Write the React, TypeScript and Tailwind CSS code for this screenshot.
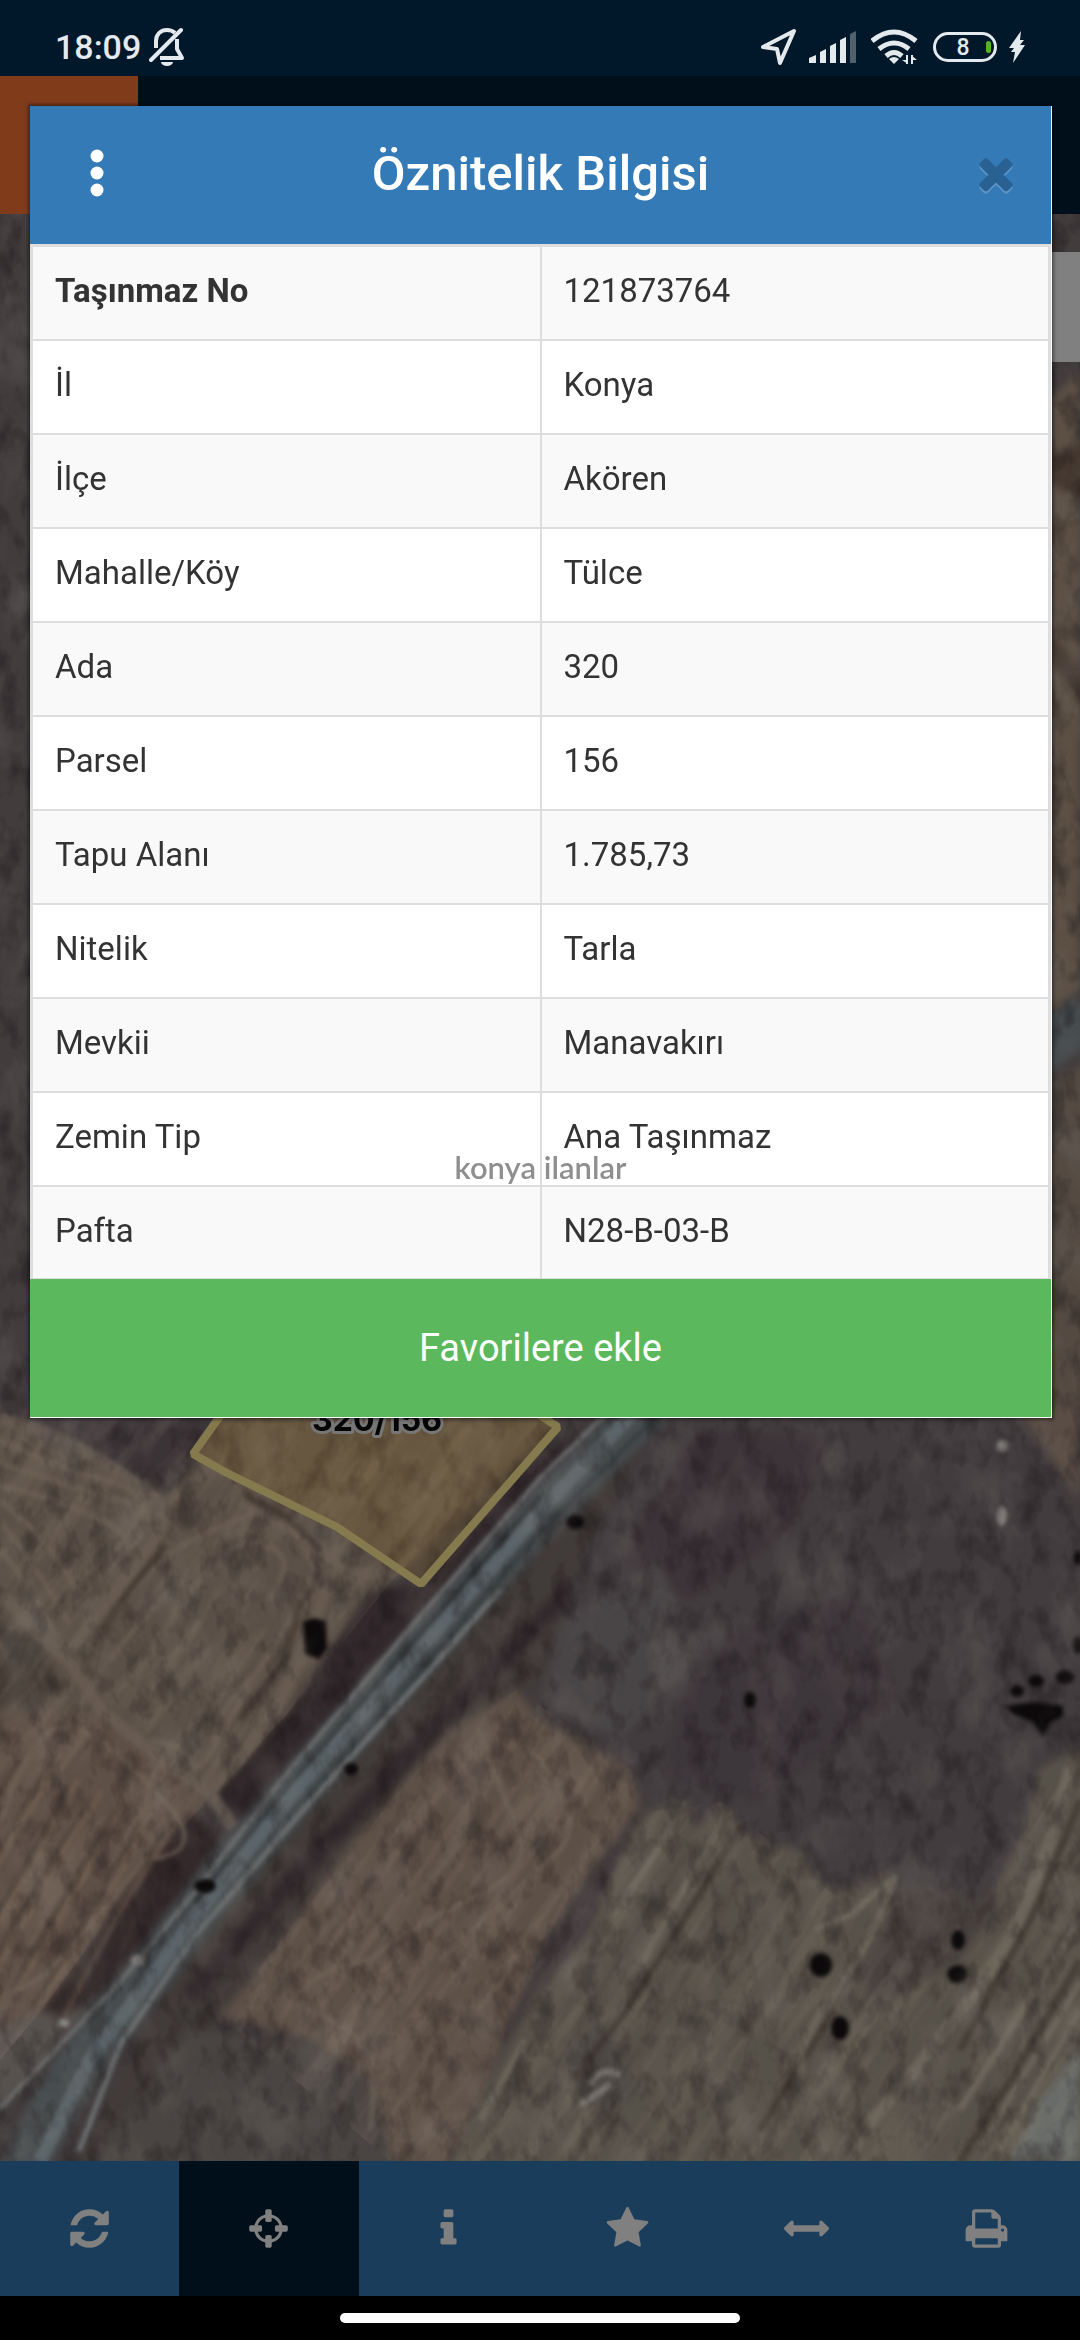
import { useState } from 'react';

const attributes = [
  { label: 'Taşınmaz No', value: '121873764' },
  { label: 'İl', value: 'Konya' },
  { label: 'İlçe', value: 'Akören' },
  { label: 'Mahalle/Köy', value: 'Tülce' },
  { label: 'Ada', value: '320' },
  { label: 'Parsel', value: '156' },
  { label: 'Tapu Alanı', value: '1.785,73' },
  { label: 'Nitelik', value: 'Tarla' },
  { label: 'Mevkii', value: 'Manavakırı' },
  { label: 'Zemin Tip', value: 'Ana Taşınmaz' },
  { label: 'Pafta', value: 'N28-B-03-B' },
];

// Font Awesome 4 shapes on their 1792 grid
const tools = [
  {
    id: 'refresh',
    label: 'Yenile',
    path: 'M1639 1056q0 5-1 7-64 268-268 434.5t-478 166.5q-146 0-282.5-55t-243.5-157l-129 129q-19 19-45 19t-45-19-19-45v-448q0-26 19-45t45-19h448q26 0 45 19t19 45-19 45l-137 137q71 66 161 102t187 36q134 0 250-65t186-179q11-17 53-117 8-23 30-23h192q13 0 22.5 9.5t9.5 22.5zm25-800v448q0 26-19 45t-45 19h-448q-26 0-45-19t-19-45 19-45l138-138q-148-137-349-137-134 0-250 65t-186 179q-11 17-53 117-8 23-30 23h-199q-13 0-22.5-9.5t-9.5-22.5v-7q65-268 270-434.5t480-166.5q146 0 284 55.5t245 156.5l130-129q19-19 45-19t45 19 19 45z',
  },
  {
    id: 'locate',
    label: 'Konum',
    path: 'M1325 1024h-109q-26 0-45-19t-19-45v-128q0-26 19-45t45-19h109q-32-108-112.5-188.5t-188.5-112.5v109q0 26-19 45t-45 19h-128q-26 0-45-19t-19-45v-109q-108 32-188.5 112.5t-112.5 188.5h109q26 0 45 19t19 45v128q0 26-19 45t-45 19h-109q32 108 112.5 188.5t188.5 112.5v-109q0-26 19-45t45-19h128q26 0 45 19t19 45v109q108-32 188.5-112.5t112.5-188.5zm339-192v128q0 26-19 45t-45 19h-143q-37 161-154.5 278.5t-278.5 154.5v143q0 26-19 45t-45 19h-128q-26 0-45-19t-19-45v-143q-161-37-278.5-154.5t-154.5-278.5h-143q-26 0-45-19t-19-45v-128q0-26 19-45t45-19h143q37-161 154.5-278.5t278.5-154.5v-143q0-26 19-45t45-19h128q26 0 45 19t19 45v143q161 37 278.5 154.5t154.5 278.5h143q26 0 45 19t19 45z',
  },
  {
    id: 'info',
    label: 'Bilgi',
    path: 'M1216 1344v128q0 26-19 45t-45 19h-512q-26 0-45-19t-19-45v-128q0-26 19-45t45-19h64v-384h-64q-26 0-45-19t-19-45v-128q0-26 19-45t45-19h384q26 0 45 19t19 45v576h64q26 0 45 19t19 45zm-128-1152v192q0 26-19 45t-45 19h-256q-26 0-45-19t-19-45v-192q0-26 19-45t45-19h256q26 0 45 19t19 45z',
  },
  {
    id: 'favorites',
    label: 'Favoriler',
    path: 'M1728 647q0 22-26 48l-363 354 86 500q1 7 1 20 0 21-10.5 35.5t-30.5 14.5q-19 0-40-12l-449-236-449 236q-22 12-40 12-21 0-31.5-14.5t-10.5-35.5q0-6 2-20l86-500-364-354q-25-27-25-48 0-37 56-46l502-73 225-455q19-41 49-41t49 41l225 455 502 73q56 9 56 46z',
  },
  {
    id: 'measure',
    label: 'Ölçüm',
    path: 'M1792 896q0 26-19 45l-256 256q-19 19-45 19t-45-19-19-45v-128h-1024v128q0 26-19 45t-45 19-45-19l-256-256q-19-19-19-45t19-45l256-256q19-19 45-19t45 19 19 45v128h1024v-128q0-26 19-45t45-19 45 19l256 256q19 19 19 45z',
  },
  {
    id: 'print',
    label: 'Yazdır',
    path: 'M448 1536h896v-256h-896v256zm0-640h896v-384h-160q-40 0-68-28t-28-68v-160h-640v640zm1152 64q0-26-19-45t-45-19-45 19-19 45 19 45 45 19 45-19 19-45zm128 0v416q0 13-9.5 22.5t-22.5 9.5h-224v160q0 40-28 68t-68 28h-960q-40 0-68-28t-28-68v-160h-224q-13 0-22.5-9.5t-9.5-22.5v-416q0-79 56.5-135.5t135.5-56.5h64v-544q0-40 28-68t68-28h672q40 0 88 20t76 48l152 152q28 28 48 76t20 88v256h64q79 0 135.5 56.5t56.5 135.5z',
  },
];

const closePath =
  'M1490 1322q0 40-28 68l-136 136q-28 28-68 28t-68-28l-294-294-294 294q-28 28-68 28t-68-28l-136-136q-28-28-28-68t28-68l294-294-294-294q-28-28-28-68t28-68l136-136q28-28 68-28t68 28l294 294 294-294q28-28 68-28t68 28l136 136q28 28 28 68t-28 68l-294 294 294 294q28 28 28 68z';

function StatusBar() {
  return (
    <div className="flex h-[76px] items-center justify-between bg-[#001829] pt-[18px] pr-[55px] pl-[55px] text-[#e4e9ed]">
      <div className="flex items-center gap-2">
        <span className="text-[34px] leading-10 font-medium">18:09</span>
        <svg width="36" height="40" viewBox="0 0 36 40" fill="none" stroke="currentColor" strokeWidth="4">
          <path d="M7 21V14C7 7 12 3 18 3c3 0 6 1 8 3" />
          <path d="M28 12v10l5 9H11" strokeLinejoin="round" />
          <path d="M2 33 32 3" strokeLinecap="round" />
          <path d="M12 35h12a6 4 0 0 1-12 0z" fill="currentColor" stroke="none" />
        </svg>
      </div>
      <div className="flex items-center gap-3">
        <svg width="37" height="38" viewBox="0 0 37 38" fill="none" stroke="currentColor" strokeWidth="4" strokeLinejoin="round">
          <path d="M3 19 34 3 20 35 17 21z" />
        </svg>
        <svg width="50" height="32" viewBox="0 0 50 32" fill="currentColor">
          <path d="M0 27l7-3v8H0z" />
          <path d="M11 21l6-3v14h-6z" />
          <path d="M21 15l6-3v20h-6z" />
          <path d="M31 9l6-3v26h-6z" />
          <path d="M41 3l6-3v32h-6z" opacity="0.35" />
        </svg>
        <svg width="50" height="36" viewBox="0 0 50 36" fill="none" stroke="currentColor" strokeWidth="5">
          <path d="M1 12Q23-6 45 12" />
          <path d="M8 20Q23 8 38 20" />
          <path d="M15 27Q23 20 31 27" />
          <path d="M18 30q5-4 10 0l-5 5z" fill="currentColor" stroke="none" />
          <path d="M36 26v9M41 26v9" strokeWidth="2" />
          <path d="M31 31h6v4zM40 26l6 5h-6z" fill="currentColor" stroke="none" />
        </svg>
        <div className="relative flex h-[30px] w-16 items-center justify-center rounded-full border-[3px] border-current pr-1">
          <span className="text-[23px] leading-none font-medium">8</span>
          <span className="absolute right-[3px] h-3 w-[5px] rounded-sm bg-[#54b32b]" />
        </div>
        <svg width="16" height="32" viewBox="0 0 16 32" fill="currentColor">
          <path d="M12 0 0 17h5L2 21h4L4 32 16 14h-5l4-5h-4z" />
        </svg>
      </div>
    </div>
  );
}

type FurrowsProps = {
  x: number;
  y: number;
  dx: number;
  dy: number;
  count: number;
  step: number;
  color: string;
};

// plough lines parallel to the road, swept across a field
function Furrows({ x, y, dx, dy, count, step, color }: FurrowsProps) {
  return (
    <g stroke={color} strokeWidth="5" fill="none" opacity="0.4">
      {Array.from({ length: count }, (_, i) => {
        const sx = x + i * step;
        const sy = y + i * step * 0.5;
        const bend = (i % 3) * 8 - 8;
        return <path key={i} d={`M${sx} ${sy}q${dx / 2 + bend} ${dy / 2} ${dx} ${dy}`} />;
      })}
    </g>
  );
}

function SatelliteMap() {
  return (
    <svg className="absolute inset-0 h-full w-full" viewBox="0 214 1080 1947" preserveAspectRatio="xMidYMid slice">
      <defs>
        <filter id="grain" x="0" y="0" width="100%" height="100%" colorInterpolationFilters="sRGB">
          <feTurbulence type="fractalNoise" baseFrequency="0.045 0.028" numOctaves="4" seed="7" />
          <feColorMatrix values="0 0 0 0 0.05  0 0 0 0 0.03  0 0 0 0 0.04  3 0 0 0 -1.4" />
        </filter>
        <filter id="glow" x="0" y="0" width="100%" height="100%" colorInterpolationFilters="sRGB">
          <feTurbulence type="fractalNoise" baseFrequency="0.02 0.013" numOctaves="4" seed="21" />
          <feColorMatrix values="0 0 0 0 0.6  0 0 0 0 0.58  0 0 0 0 0.56  3 0 0 0 -1.4" />
        </filter>
        <filter id="streaks" x="0" y="0" width="100%" height="100%" colorInterpolationFilters="sRGB">
          <feTurbulence type="fractalNoise" baseFrequency="0.008 0.05" numOctaves="3" seed="4" />
          <feColorMatrix values="0 0 0 0 0.7  0 0 0 0 0.64  0 0 0 0 0.56  3 0 0 0 -1.3" />
        </filter>
        <filter id="soft" colorInterpolationFilters="sRGB">
          <feGaussianBlur stdDeviation="4" />
        </filter>
        <filter id="fine" colorInterpolationFilters="sRGB">
          <feGaussianBlur stdDeviation="2" />
        </filter>
        <clipPath id="fields">
          <path d="M0 1400H560L389 1584 286 1715 220 1788 155 1856 41 2011 0 2060zM448 1730 517 1690 630 1768 647 1812 722 1802 833 1894 981 1914 1080 1749V2161H390L220 2016z" />
        </clipPath>
      </defs>

      <rect y="214" width="1080" height="1947" fill="#423c3d" />
      <g filter="url(#soft)">
        {/* left fields */}
        <path d="M-20 1400 0 1415 96 1458 165 1504 220 1418H560L389 1584 286 1715 213 1795 155 1856 41 2011-20 2060z" fill="#5b5047" />
        <path d="M-20 1715 103 1715 179 1773 200 1812 155 1856 41 2011-20 2040z" fill="#5f5047" />
        <path d="M-20 1610 40 1640 62 1690-20 1712z" fill="#443b34" />
        <path d="M20 1400 110 1455 165 1490 215 1430V1400z" fill="#3b3437" />
        <path d="M-20 2040 41 2011 90 2010 0 2110z" fill="#57524e" />
        {/* verges */}
        <path d="M600 1418 516 1480 421 1584 370 1590 286 1715 220 1788 241 1820 406 1640 620 1440z" fill="#33292c" />
        <path d="M190 1812 220 1831 186 1899 138 1957 65 2016 41 2011 96 1943 155 1856z" fill="#34292a" />
        <path d="M650 1430 424 1676 310 1802 193 1938 79 2161H120L220 2016 344 1851 448 1730 540 1686 580 1560z" fill="#413b39" />
        <path d="M600 1560 448 1715 310 1860 189 1996" fill="none" stroke="#32292c" strokeWidth="18" />
        {/* ploughed ground */}
        <path d="M660 1418H1040L1080 1530V1749L1022 1836 981 1914 888 1914 895 1870 833 1894 747 1836 647 1812 630 1768 540 1710 570 1580z" fill="#423c3e" />
        <path d="M700 1430 830 1440 790 1530 690 1600 620 1560z" fill="#3c3438" />
        <path d="M700 1640 860 1590 900 1700 760 1800 660 1780z" fill="#3d363a" />
        <path d="M560 1620 660 1560 700 1660 620 1740 540 1700z" fill="#494445" />
        {/* lower strip field */}
        <path d="M448 1730 517 1690 540 1720 630 1768 640 1807 602 1856 540 1948 500 2050 450 2180H390L370 2080 310 2040 220 2016 275 1948 344 1851z" fill="#5d5047" />
        {/* lower right fields */}
        <path d="M647 1812 685 1797 695 1831 722 1802 747 1836 802 1851 833 1894 895 1870 888 1914 981 1914 1022 1836 1039 1768 1100 1740V2180H440L500 2060 600 1880z" fill="#575249" />
        <path d="M640 1810 600 1860 540 1960 500 2040 590 1930z" fill="#40383a" />
        <path d="M895 1880 880 1940 860 1960 870 2010 960 1960 1000 1900z" fill="#48423f" />
        <path d="M560 2060 600 2020 640 2090 600 2120z" fill="#4a4642" />
        <path d="M1030 420 1080 370V990L1040 1020z" fill="#5c5045" />
        <path d="M1040 460 1090 440V500L1040 480zM1040 620 1090 680V720L1040 650z" fill="#42362e" />
        <path d="M1040 1090 1090 1060V1418H1040z" fill="#544a42" />
        <path d="M1010 1400 1080 1400V1500z" fill="#5a4d45" />
        <path d="M190 2030 310 2045 370 2085 400 2180H80z" fill="#4a4542" />
        <path d="M1040 2100 1080 2050V2161H1010z" fill="#686b68" />
      </g>

      <g clipPath="url(#fields)">
        <rect x="-900" y="-900" width="3000" height="3000" transform="translate(540 1700) rotate(-55)" filter="url(#streaks)" opacity="0.16" />
      </g>

      <g filter="url(#fine)" fill="none">
        <Furrows x={20} y={1760} dx={-110} dy={190} count={7} step={24} color="#3f352f" />
        <Furrows x={30} y={1755} dx={-110} dy={190} count={7} step={24} color="#7a6656" />
        <Furrows x={490} y={1730} dx={-210} dy={290} count={5} step={24} color="#76655a" />
        <Furrows x={350} y={1430} dx={-60} dy={90} count={7} step={24} color="#4a4038" />
        <Furrows x={690} y={1850} dx={-140} dy={230} count={3} step={26} color="#46423c" />

        {/* headlands */}
        <g stroke="#6b5f55" strokeWidth="12" opacity="0.75">
          <path d="M0 1419Q50 1430 96 1458T165 1504L213 1463" />
          <path d="M165 1504Q165 1530 140 1560L103 1608 70 1650" />
          <path d="M0 1594 69 1662 103 1712 179 1773 210 1793 234 1828" />
          <path d="M331 1565Q320 1620 286 1686T213 1788" />
          <path d="M241 1500 310 1540 350 1575 400 1570" />
        </g>
        <g stroke="#73665a" strokeWidth="5" opacity="0.6">
          <path d="M0 1440Q60 1470 105 1480T150 1530" />
          <path d="M0 1463Q80 1490 120 1500T138 1540L86 1594" />
          <path d="M0 1485Q60 1500 100 1520T120 1545L80 1580" />
          <path d="M0 1521Q40 1570 69 1623M0 1500Q60 1550 75 1590M0 1550Q35 1590 55 1635" />
          <path d="M86 1652Q150 1560 193 1540T260 1510 315 1570L286 1628Q250 1680 224 1730T193 1763 150 1740" />
          <path d="M110 1660Q150 1610 180 1580M215 1570Q230 1535 265 1545T270 1600M200 1620 170 1660" />
          <path d="M300 1590Q290 1640 250 1680T215 1750" />
          <path d="M0 1822Q20 1760 41 1739T90 1734 165 1802 145 1860L60 1960Q30 1990 0 1996" />
          <path d="M480 1730Q500 1790 518 1830T470 1900 370 1960Q290 1975 303 2010 340 2020 360 2040T370 2130" />
          <path d="M530 1750Q590 1810 560 1850L440 1960" />
        </g>
        <g stroke="#342a24" strokeWidth="7" opacity="0.5">
          <path d="M165 1545 130 1590 92 1645" />
          <path d="M245 1495Q290 1515 320 1550" />
          <path d="M300 1600 285 1660 240 1720" />
          <path d="M740 1827 690 1910 626 2011 574 2079" />
          <path d="M835 2010 790 2080 760 2130" />
          <path d="M1080 1800 1040 1900 960 2050M1080 1960 1040 2030 960 2161" />
        </g>
        <g stroke="#7a7669" strokeWidth="6" opacity="0.55">
          <path d="M726 1812Q690 1880 643 1962M685 1802Q660 1850 610 1920" />
          <path d="M895 1875Q870 1950 833 1996T802 2079" />
          <path d="M890 1880 850 1915 815 1930" />
          <path d="M1070 1768Q1050 1850 1022 1914T867 2127" strokeWidth="12" />
          <path d="M1080 1920 960 2110M1080 1982 981 2146M1080 2010 1000 2150" />
          <path d="M525 2040 480 2120" />
          <path d="M590 2085q10-20 30-10M580 2105l30-20" stroke="#9a9690" />
        </g>
      </g>

      {/* road */}
      <g fill="none">
        <path d="M1090 1015Q820 1200 640 1414L540 1514 415 1655 292 1795 193 1916 120 2010Q60 2080 20 2180" stroke="#474c4e" strokeWidth="46" filter="url(#soft)" />
        <g filter="url(#fine)">
          <path d="M610 1410 540 1478 406 1633 275 1788 193 1894 120 1982 0 2108" stroke="#6f7070" strokeWidth="4" />
          <path d="M540 1497 415 1640 280 1800 195 1905" stroke="#33373a" strokeWidth="6" />
          <path d="M632 1414 540 1512 415 1655 292 1795 193 1920 90 2060 40 2161" stroke="#5b6468" strokeWidth="14" />
          <path d="M655 1418 540 1532 420 1672 305 1802" stroke="#3a3f41" strokeWidth="5" />
          <path d="M500 1590 424 1676 310 1802 193 1938 120 2045 79 2151" stroke="#6d7071" strokeWidth="5" />
        </g>
      </g>

      <g fill="#0d0a0b" filter="url(#fine)">
        <path d="M303 1622l10-4 13 3 1 28-8 10-14-5z" />
        <ellipse cx="821" cy="1965" rx="11" ry="12" />
        <ellipse cx="840" cy="2028" rx="9" ry="12" />
        <ellipse cx="957" cy="1974" rx="10" ry="9" />
        <ellipse cx="958" cy="1940" rx="7" ry="10" />
        <path d="M1005 1706l30-4 28 4 0 10-12 6-8 16-10-16-20-8z" />
        <ellipse cx="1036" cy="1681" rx="8" ry="6" />
        <ellipse cx="1065" cy="1677" rx="9" ry="7" />
        <ellipse cx="1017" cy="1691" rx="7" ry="6" />
        <ellipse cx="1078" cy="1645" rx="5" ry="9" />
        <ellipse cx="1078" cy="1558" rx="4" ry="7" />
        <ellipse cx="575" cy="1522" rx="9" ry="7" />
        <ellipse cx="205" cy="1886" rx="11" ry="7" />
        <ellipse cx="750" cy="1700" rx="6" ry="8" />
        <ellipse cx="351" cy="1769" rx="7" ry="6" />
      </g>
      <g fill="#8b8885" filter="url(#fine)">
        <ellipse cx="1002" cy="1516" rx="5" ry="10" />
        <ellipse cx="1003" cy="1446" rx="6" ry="6" />
        <ellipse cx="64" cy="2023" rx="5" ry="4" />
        <ellipse cx="138" cy="1960" rx="7" ry="5" />
      </g>

      <rect y="214" width="1080" height="1947" filter="url(#grain)" opacity="0.3" />
      <rect y="214" width="1080" height="1947" filter="url(#glow)" opacity="0.16" />

      {/* selected parcel */}
      <path d="M250 1374 193 1454 225 1472 337 1527 421 1584 558 1427 500 1390z" fill="#8a6a2a" fillOpacity="0.25" stroke="#857a4e" strokeWidth="8" strokeLinejoin="bevel" />
      <text x="377" y="1431" textAnchor="middle" className="[font-family:Inter,sans-serif] text-[32px] font-bold" fill="#050505" stroke="#777777" strokeWidth="6" strokeLinejoin="round" paintOrder="stroke">
        320/156
      </text>
    </svg>
  );
}

function AttributeDialog({ onClose }: { onClose: () => void }) {
  const [favorite, setFavorite] = useState(false);

  return (
    <section
      role="dialog"
      aria-labelledby="dialog-title"
      className="relative border-r border-b border-white bg-white text-[#333333] shadow-[0_0_3px_2px_rgba(0,0,0,0.4)]"
    >
      <header className="flex h-[138px] items-center bg-[#337ab7] pb-1 text-white">
        <button type="button" aria-label="Menü" className="flex h-full w-[134px] items-center justify-center">
          <svg width="14" height="48" viewBox="0 0 14 48" fill="currentColor">
            <circle cx="7" cy="7" r="6.5" />
            <circle cx="7" cy="24" r="6.5" />
            <circle cx="7" cy="41" r="6.5" />
          </svg>
        </button>
        <h1 id="dialog-title" className="flex-1 text-center text-[49px] leading-none font-medium">
          Öznitelik Bilgisi
        </h1>
        <button type="button" aria-label="Kapat" onClick={onClose} className="flex h-full w-[134px] items-center justify-end pr-[30px]">
          <svg width="50" height="50" viewBox="0 0 1792 1792">
            <path d={closePath} fill="#5c94c5" transform="translate(0 90)" />
            <path d={closePath} fill="#296292" />
          </svg>
        </button>
      </header>

      <table className="w-full table-fixed border-collapse border-[3px] border-[#dddddd] text-left text-[33px] leading-[40px]">
        <tbody>
          {attributes.map((row, i) => (
            <tr key={row.label} className="h-[94px] odd:bg-[#f9f9f9]">
              {i === 0 ? (
                <th scope="row" className="border-2 border-[#dddddd] px-[22px] pb-[3px] font-bold">{row.label}</th>
              ) : (
                <td className="border-2 border-[#dddddd] px-[22px] pb-[3px]">{row.label}</td>
              )}
              <td className="border-2 border-[#dddddd] px-[22px] pb-[3px]">{row.value}</td>
            </tr>
          ))}
        </tbody>
      </table>

      <button
        type="button"
        aria-pressed={favorite}
        onClick={() => setFavorite(!favorite)}
        className="relative -mt-[2px] block h-[138px] w-full bg-[#5cb85c] text-center text-[38px] leading-none text-white"
      >
        Favorilere ekle
      </button>

      <span className="pointer-events-none absolute inset-x-0 bottom-[232px] text-center [font-family:Lato,sans-serif] text-[31px] leading-9 font-semibold text-[#8f8f8f]">
        konya ilanlar
      </span>
    </section>
  );
}

export default function App() {
  const [active, setActive] = useState('locate');
  const [open, setOpen] = useState(true);

  return (
    <div className="relative flex min-h-screen flex-col bg-black [font-family:Roboto,sans-serif]">
      <StatusBar />
      <div className="h-[138px] bg-[#000f1a]">
        <div className="h-full w-[138px] bg-[#803b1b]" />
      </div>
      <main className="relative flex-1 overflow-hidden">
        <SatelliteMap />
        <div className="absolute top-[38px] right-0 h-[110px] w-10 bg-[#808080]" />
      </main>
      <nav className="grid h-[135px] grid-cols-6 bg-[#1a3d5c] pr-1 text-[#808080]">
        {tools.map((tool) => (
          <button
            key={tool.id}
            type="button"
            aria-label={tool.label}
            onClick={() => setActive(tool.id)}
            className={active === tool.id ? 'flex items-center justify-center bg-[#000f1a]' : 'flex items-center justify-center'}
          >
            <svg width="45" height="45" viewBox="0 0 1792 1792" fill="currentColor">
              <path d={tool.path} />
            </svg>
          </button>
        ))}
      </nav>
      <div className="flex h-11 items-center justify-center pb-[1px]">
        <div className="h-[10px] w-[400px] rounded-full bg-white" />
      </div>

      {open && (
        <div className="absolute inset-x-0 top-[106px] pr-7 pl-[30px]">
          <AttributeDialog onClose={() => setOpen(false)} />
        </div>
      )}
    </div>
  );
}
